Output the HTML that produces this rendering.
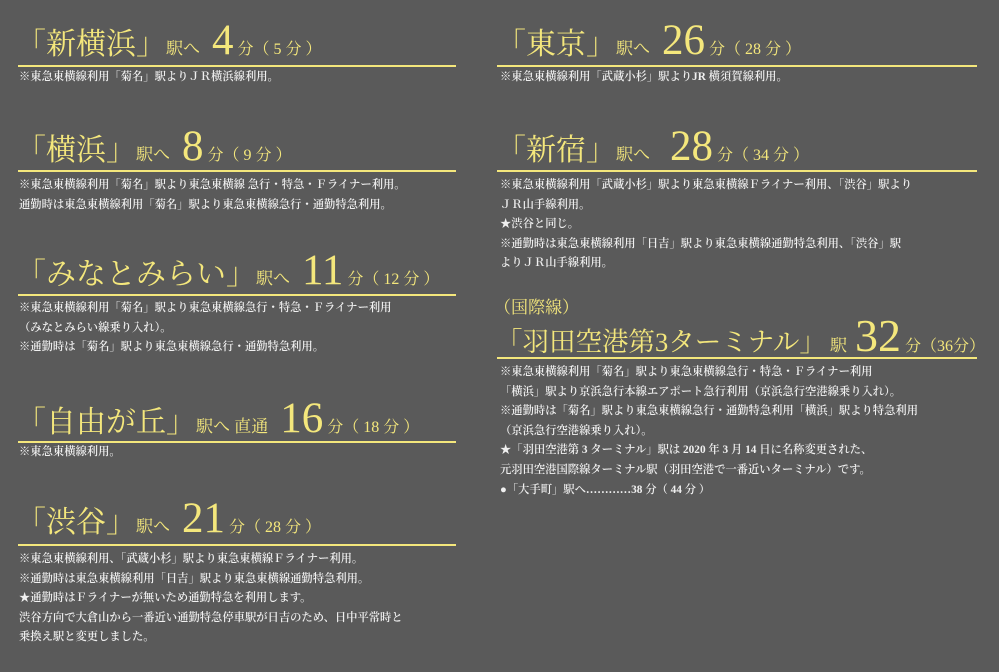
<!DOCTYPE html>
<html><head><meta charset="utf-8"><style>
body{margin:0;width:999px;height:672px;background:#5a5a5a;overflow:hidden;position:relative;font-family:"Liberation Serif","Noto Serif CJK JP",serif}
.h{position:absolute;color:#f4e77c;white-space:nowrap;line-height:1}
.h .s{font-size:30px}
.h .e{font-size:17px}
.h .n{font-size:43px;margin:0 4px 0 12px}
.h .m{font-size:16px}
.ln{position:absolute;height:1.5px;background:#f4e77c}
.l{left:18px;width:438px}
.r{left:497px;width:480px}
.t{position:absolute;color:#f0f0f0;font-size:11.3px;line-height:19.6px;white-space:nowrap;font-weight:600}
</style></head><body>

<div class="h" style="left:16px;top:19px"><span class="s">「新横浜」</span><span class="e">駅へ</span><span class="n">4</span><span class="m">分（ 5 分 ）</span></div>
<div class="ln l" style="top:65px"></div>
<div class="t" style="left:19px;top:68px">※東急東横線利用「菊名」駅よりＪＲ横浜線利用。</div>

<div class="h" style="left:16px;top:125px"><span class="s">「横浜」</span><span class="e">駅へ</span><span class="n">8</span><span class="m">分（ 9 分 ）</span></div>
<div class="ln l" style="top:170px"></div>
<div class="t" style="left:19px;top:176px">※東急東横線利用「菊名」駅より東急東横線 急行・特急・Ｆライナー利用。<br>通勤時は東急東横線利用「菊名」駅より東急東横線急行・通勤特急利用。</div>

<div class="h" style="left:16px;top:249px"><span class="s">「みなとみらい」</span><span class="e">駅へ</span><span class="n">11</span><span class="m">分（ 12 分 ）</span></div>
<div class="ln l" style="top:294px"></div>
<div class="t" style="left:19px;top:299px">※東急東横線利用「菊名」駅より東急東横線急行・特急・Ｆライナー利用<br>（みなとみらい線乗り入れ）。<br>※通勤時は「菊名」駅より東急東横線急行・通勤特急利用。</div>

<div class="h" style="left:16px;top:397px"><span class="s">「自由が丘」</span><span class="e">駅へ 直通</span><span class="n">16</span><span class="m">分（ 18 分 ）</span></div>
<div class="ln l" style="top:441px"></div>
<div class="t" style="left:19px;top:443px">※東急東横線利用。</div>

<div class="h" style="left:16px;top:497px"><span class="s">「渋谷」</span><span class="e">駅へ</span><span class="n">21</span><span class="m">分（ 28 分 ）</span></div>
<div class="ln l" style="top:544px"></div>
<div class="t" style="left:19px;top:550px">※東急東横線利用、「武蔵小杉」駅より東急東横線Ｆライナー利用。<br>※通勤時は東急東横線利用「日吉」駅より東急東横線通勤特急利用。<br>★通勤時はＦライナーが無いため通勤特急を利用します。<br>渋谷方向で大倉山から一番近い通勤特急停車駅が日吉のため、日中平常時と<br>乗換え駅と変更しました。</div>

<div class="h" style="left:496px;top:19px"><span class="s">「東京」</span><span class="e">駅へ</span><span class="n">26</span><span class="m">分（ 28 分 ）</span></div>
<div class="ln r" style="top:65px"></div>
<div class="t" style="left:500px;top:68px">※東急東横線利用「武蔵小杉」駅よりJR 横須賀線利用。</div>

<div class="h" style="left:496px;top:125px"><span class="s">「新宿」</span><span class="e">駅へ</span><span class="n" style="margin-left:20px">28</span><span class="m">分（ 34 分 ）</span></div>
<div class="ln r" style="top:170px"></div>
<div class="t" style="left:500px;top:176px">※東急東横線利用「武蔵小杉」駅より東急東横線Ｆライナー利用、「渋谷」駅より<br>ＪＲ山手線利用。<br>★渋谷と同じ。<br>※通勤時は東急東横線利用「日吉」駅より東急東横線通勤特急利用、「渋谷」駅<br>よりＪＲ山手線利用。</div>

<div class="h" style="left:494px;top:299px;font-size:17px">（国際線）</div>
<div class="h" style="left:496px;top:313px"><span class="s" style="font-size:26.5px">「羽田空港第3ターミナル」</span><span class="e" style="margin-left:4px">駅</span><span class="n" style="margin-left:8px;font-size:46px">32</span><span class="m">分（36分）</span></div>
<div class="ln r" style="top:357px"></div>
<div class="t" style="left:500px;top:363px">※東急東横線利用「菊名」駅より東急東横線急行・特急・Ｆライナー利用<br>「横浜」駅より京浜急行本線エアポート急行利用（京浜急行空港線乗り入れ）。<br>※通勤時は「菊名」駅より東急東横線急行・通勤特急利用「横浜」駅より特急利用<br>（京浜急行空港線乗り入れ）。<br>★「羽田空港第 3 ターミナル」駅は 2020 年 3 月 14 日に名称変更された、<br>元羽田空港国際線ターミナル駅（羽田空港で一番近いターミナル）です。<br>●「大手町」駅へ…………38 分（ 44 分 ）</div>

</body></html>
